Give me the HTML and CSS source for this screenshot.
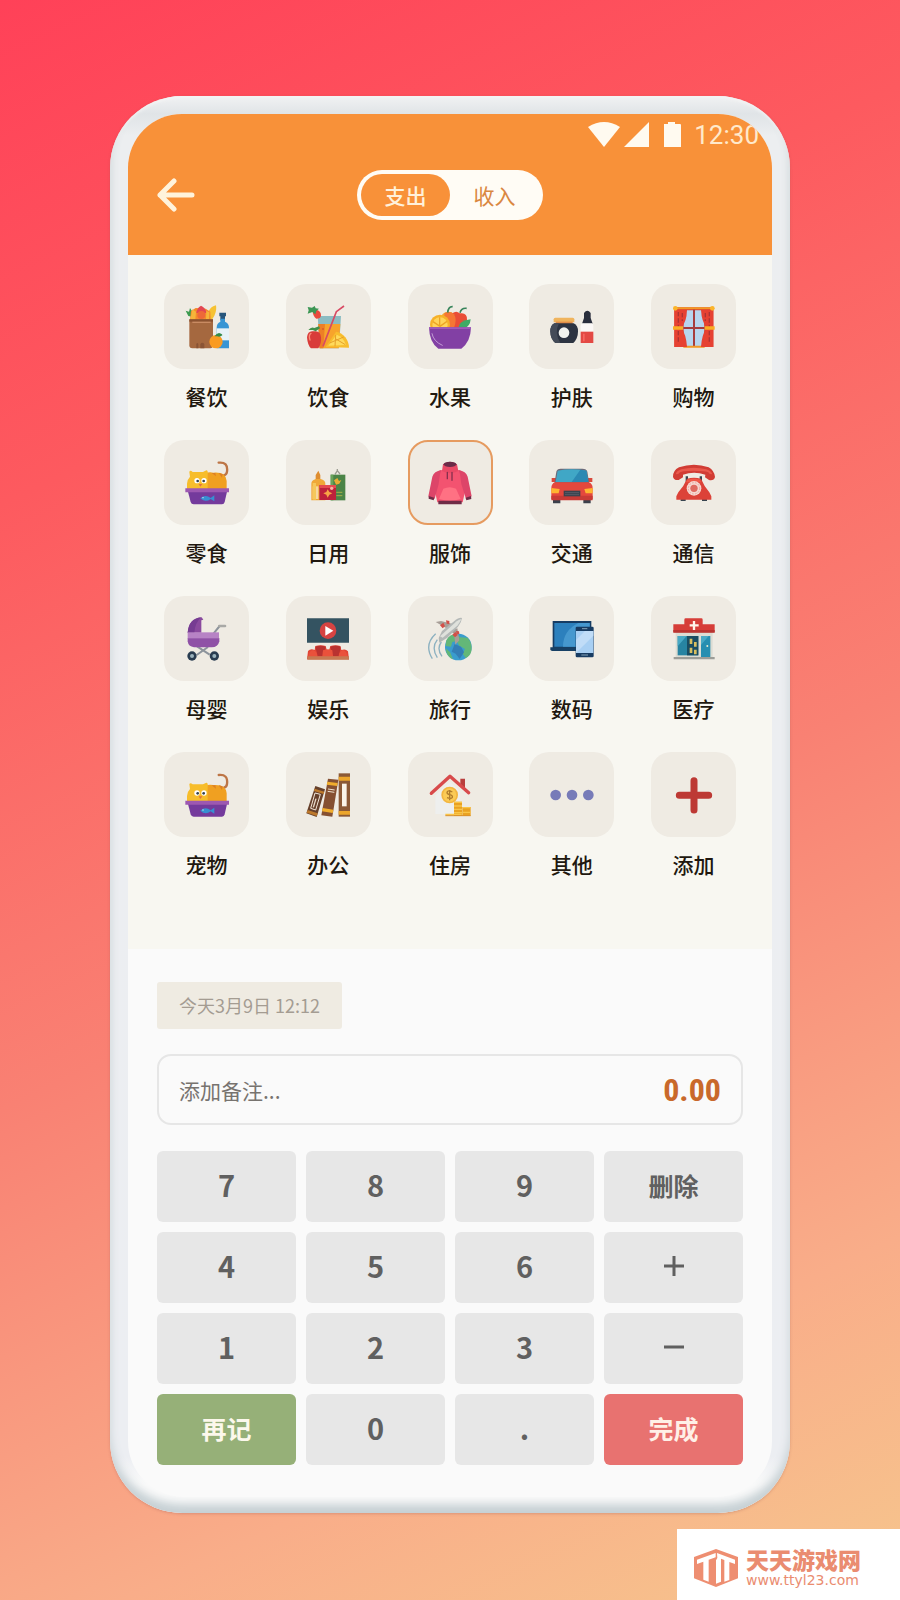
FILE: index.html
```html
<!DOCTYPE html>
<html lang="zh-CN">
<head>
<meta charset="utf-8">
<meta name="viewport" content="width=device-width, initial-scale=1">
<title>记账</title>
<link rel="stylesheet" href="styles.css">
</head>
<body>
<main class="phone">
  <div class="screen">
    <header class="header">
      <div class="status">
        <svg class="status-icons" width="96" height="28" viewBox="0 0 96 28" aria-hidden="true">
          <path d="M0 6Q16-4 32 6L16 26Z"/><path d="M36 26 61 1V26Z"/><path d="M76 3h4V1h7v2h5q1 0 1 1V26H76Z"/>
        </svg>
        <span class="clock">12:30</span>
      </div>
      <nav class="nav">
        <button class="back" type="button" aria-label="返回">
          <svg width="38" height="34" viewBox="0 0 38 34"><path d="M17 3 3 17l14 14M3 17h32"/></svg>
        </button>
        <div class="toggle">
          <button class="toggle-option is-active" type="button" aria-pressed="true">支出</button>
          <button class="toggle-option" type="button" aria-pressed="false">收入</button>
        </div>
      </nav>
    </header>

    <section class="categories" aria-label="分类">
      <button class="category" type="button">
        <span class="tile"><svg viewBox="104 104 132 132">
          <path fill="#3c9a50" d="M106 121l10 3 3-11 9 14-3 12-11-2z"/>
          <path fill="#f6c234" d="M170 148c0-20 8-40 27-43 3 18-5 34-13 44z"/>
          <path fill="#f48b2c" d="M119 149l3-27 14-9 30 2 14 9 1 25z"/>
          <path fill="#e34752" d="M138 128q2-16 14-22 14 6 16 22z"/><path fill="#f6b53a" d="M126 117l11 7-2 24h-15zM168 122l9 4-1 20h-9z"/>
          <circle cx="153" cy="134" r="12" fill="#ee6938"/><path fill="#a5683f" d="M117 147h71v78q0 9-8 9h-54q-9 0-9-9z"/>
          <path fill="#8b5230" d="M117 147h71v7h-71z"/><path stroke="#c98b63" stroke-width="4" d="M126 156h55"/>
          <path fill="#8a5435" d="M138 234v-13q3-6 6 0v13zM150 234v-13q6-7 12 0v13z"/>
          <path fill="#27567c" d="M207 127h20v11h-3v12h-14v-12h-3z"/><path fill="#3795d4" d="M210 145h14v9q12 5 12 18v62h-37v-62q0-13 11-18z"/>
          <path fill="#e7f2f7" d="M199 174h37v36h-37z"/><circle cx="197" cy="214" r="20" fill="#f99b22"/>
          <path fill="#348b49" d="M193 198q5-9 13-10 10 2 10 7-8 7-15 3z"/>
        </svg></span><span class="label">餐饮</span>
      </button>
      <button class="category" type="button">
        <span class="tile"><svg viewBox="469 104 132 132">
          <path fill="#8cbcc2" d="M504 137h70l-6 97h-58z"/><path fill="#f7a42b" d="M506 161h66l-5 73h-56z"/>
          <path fill="#ed7f26" d="M506 161h20l-5 73h-12z"/><circle cx="520" cy="176" r="3" fill="#d95c27"/>
          <path fill="#f8bd2d" d="M528 230l31-46q16 2 28 17 11 15 11 31z"/><path fill="#ffda5b" d="M536 226l25-33q20 6 28 31z"/>
          <path stroke="#e6a02a" stroke-width="3" d="M558 194l-2 34M540 218l42-18M557 205l30 18"/>
          <path fill="none" stroke="#d84a63" stroke-width="5" d="M520 228l40-104 23-17"/>
          <path fill="#ea4a3d" d="M489 121l12-3q14 5 13 18-1 9-14 9-11-8-11-24z"/><path fill="#3c9654" d="M474 110l13 2 8-5 3 7 10 1-8 7-3 10-9-7-14 5 3-10z"/>
          <path fill="#d93c3a" d="M472 201q2-22 21-18 19-4 21 18 2 18-8 33h-22q-10-8-12-33z"/>
          <path fill="none" stroke="#fa8b77" stroke-width="4" stroke-linecap="round" d="M481 209q-5-14 3-20"/>
          <path fill="#40904a" d="M476 179q9-11 18-6l14-5 3 6-13 9-9-4z"/>
        </svg></span><span class="label">饮食</span>
      </button>
      <button class="category" type="button">
        <span class="tile"><svg viewBox="84 104 132 132">
          <circle cx="145" cy="148" r="24" fill="#f4a62f"/><path fill="#e94d36" d="M157 129q12-9 22 0 23-4 22 19-2 22-28 28h-28z"/>
          <path fill="#f57634" d="M133 129q18-9 29 3 10 15 0 40h-28z"/>
          <path fill="none" stroke="#37845a" stroke-width="5" d="M143 127q2-19 15-18M180 127q4-15 20-13"/>
          <circle cx="120" cy="163" r="30" fill="#f6b129"/><circle cx="120" cy="164" r="23" fill="#ffd45a"/>
          <path stroke="#eca426" stroke-width="4" d="M119 141v26M99 154l21 14M141 153l-21 15"/><path fill="#3eab65" d="M175 172q2-21 37-25-2 22-20 28z"/>
          <path fill="#8240a4" d="M87 171h126q-1 44-29 64h-69q-27-18-28-64z"/><path fill="#9d5bb8" d="M87 171h126v5H87z"/>
          <path fill="none" stroke="#c29ad5" stroke-width="3" stroke-linecap="round" d="M96 190q4 23 31 35"/>
        </svg></span><span class="label">水果</span>
      </button>
      <button class="category" type="button">
        <span class="tile"><svg viewBox="449 104 132 132">
          <path fill="#f0b45d" d="M460 147q0-5 5-5h52q5 0 5 5v9h-62z"/><path fill="#e18d48" d="M466 154h51v7h-51z"/>
          <path fill="#2d3442" d="M462 159h58q13 6 13 24 0 22-14 35h-54q-15-12-15-35 0-18 12-24z"/>
          <path fill="#444b58" d="M462 159h14q-15 28 4 59h-15q-15-12-15-35 0-18 12-24z"/>
          <circle cx="491" cy="187" r="16" fill="#f2f3ef"/>
          <path fill="#292e3c" d="M551 128q10-14 20 0v15l6 17h-32l6-17z"/><path fill="#fbf8f6" d="M545 159h31q3 3 3 9v20h-38v-20q0-6 4-9z"/>
          <path fill="#e34944" d="M541 184h38v34h-38z"/><path fill="#f8665f" d="M548 190h5v23h-5z"/>
        </svg></span><span class="label">护肤</span>
      </button>
      <button class="category" type="button">
        <span class="tile"><svg viewBox="814 104 132 132">
          <path fill="#d84232" d="M821 111h117v119H821z"/><path fill="#b8d5ee" d="M857 120h46q16 50 0 108h-46q-17-54 0-108z"/>
          <path stroke="#a73c3d" stroke-width="6" d="M880 117v113M848 173h64"/><path stroke="#f39925" stroke-width="6" d="M823 114h114M848 229h64"/>
          <path fill="#e64132" d="M821 118h38q-1 38-17 52h-21zM901 118h37v52h-20q-15-14-17-52zM821 176h21q14 13 17 54h-38zM918 176h20v54h-37q3-41 17-54z"/>
          <path stroke="#ad3333" stroke-width="4" stroke-dasharray="13 6" d="M833 125v91M845 128v24M926 125v91M914 128v24"/>
          <path fill="#faad25" d="M817 168h30v10h-30zM912 168h30v10h-30z"/><circle cx="824" cy="114" r="7" fill="#fbb42a"/><circle cx="935" cy="114" r="7" fill="#fbb42a"/>
        </svg></span><span class="label">购物</span>
      </button>

      <button class="category" type="button">
        <span class="tile"><svg viewBox="104 92 132 132">
          <path fill="none" stroke="#bd7546" stroke-width="7" stroke-linecap="round" d="M205 97q29-3 25 27-1 9-9 11"/>
          <path fill="#f0a021" d="M157 136q10-13 32-9 38-3 40 25v24h-72z"/><path fill="#f7bd2b" d="M117 125q2-7 10 0h31l10-5q6 0 4 14v42h-62v-16q0-12 9-21z"/>
          <path fill="#dc7f26" d="M184 128l13 10-2-10zM205 128l10 14 2-11z"/>
          <circle cx="140" cy="151" r="8" fill="#fff"/><circle cx="161" cy="151" r="8" fill="#fff"/><circle cx="142" cy="152" r="4" fill="#34424f"/><circle cx="160" cy="152" r="4" fill="#34424f"/>
          <path fill="#e4713f" d="M145 161h11l-6 8z"/><path fill="#743a9c" d="M113 184h117l-7 31q-2 7-8 7h-85q-7 0-9-7z"/><path fill="#9d58b1" d="M105 174h131v12H105z"/>
          <path fill="#378fd2" d="M150 204q15-14 31-1l11-8v18l-11-7q-16 12-31-2z"/><circle cx="158" cy="202" r="2" fill="#d6edf6"/>
        </svg></span><span class="label">零食</span>
      </button>
      <button class="category" type="button">
        <span class="tile"><svg viewBox="469 92 132 132">
          <path fill="#de8d30" d="M498 134l8-13 6 13v17h-14z"/><path fill="#f0a838" d="M485 160q0-10 14-14h14q14 4 14 14v50h-42z"/><path fill="#f7d7a1" d="M489 168h17v38h-17z"/>
          <path fill="#f5c75b" d="M489 158h10v50h-10z"/><path fill="none" stroke="#9c9d92" stroke-width="4" d="M556 132l7-11 8 10M563 116v9"/>
          <path fill="#4b8447" d="M543 133h44v77h-44z"/><path fill="#69a35b" d="M543 133h8v77h-8z"/><path fill="#e7ad34" d="M553 150l10-7 5 9 7-3-6 11-10 3z"/>
          <path stroke="#a8af49" stroke-width="3" d="M560 186h18M560 196h18"/><path fill="#bd213b" d="M509 164h50v45h-50z"/><path fill="#e44a50" d="M509 164h50v9h-50z"/>
          <path fill="#f7a446" d="M534 177l5 8 9 4-9 4-5 9-4-9-9-4 9-4z"/><circle cx="546" cy="174" r="5" fill="#f6b4a1"/>
        </svg></span><span class="label">日用</span>
      </button>
      <button class="category is-selected" type="button" aria-pressed="true">
        <span class="tile"><svg viewBox="84 92 132 132">
          <path fill="#f35370" d="M118 121q32-12 64 0l14 10 4 30-12 55h-76l-12-55 4-30z"/>
          <path fill="#dd4569" d="M124 119q-22 4-27 20l-12 59q9 7 19 7l12-44 4-30zM176 119q22 4 27 20l12 59q-9 7-17 8l-14-45-4-30z"/>
          <path fill="#e94966" d="M126 122l3-20q21-16 42 0l4 20q-25 13-49 0z"/><ellipse cx="150" cy="102" rx="19" ry="8" fill="#6b2b48"/>
          <path fill="#ff7183" d="M130 175q19-9 38 0l14 31q-32 11-65 0z"/><path stroke="#86314d" stroke-width="4" stroke-linecap="round" d="M142 126v19M156 126v24"/>
          <path fill="#6f2c47" d="M115 211h70v11h-70zM86 197l17 5-2 8-15-5zM197 202l16-5 1 9-15 4z"/>
        </svg></span><span class="label">服饰</span>
      </button>
      <button class="category" type="button">
        <span class="tile"><svg viewBox="449 92 132 132">
          <path fill="#3b404b" d="M458 201h22v18h-22zM549 201h22v18h-22z"/><path fill="#d9493b" d="M454 143h14v12h-14zM562 143h14v12h-14z"/>
          <path fill="#6d6a78" d="M468 124q2-9 13-9h65q13 0 15 9l6 37H462z"/><path fill="#40a7c6" d="M472 121q42-8 86 0l6 34h-98z"/><path fill="#2b89b3" d="M540 118l18 3 6 34h-50z"/>
          <path fill="#e4483d" d="M464 156h101q12 4 12 18v32H453v-32q0-14 11-18z"/><path fill="#c93b36" d="M453 196h124v12q0 2-3 2H456q-3 0-3-2z"/>
          <path fill="#ffb531" d="M453 173l25 3-3 13h-22zM577 173l-25 3 4 13h21z"/><path fill="#3c424d" d="M490 181h50v17h-50z"/><path stroke="#666772" stroke-width="2" d="M494 187h42M494 193h42"/>
        </svg></span><span class="label">交通</span>
      </button>
      <button class="category" type="button">
        <span class="tile"><svg viewBox="814 92 132 132">
          <path fill="#374450" d="M840 203h15v9h-15zM904 203h15v9h-15zM855 138h7v16h-7zM897 138h7v16h-7z"/>
          <path fill="#dc4238" d="M859 145q21-6 42 0 8 20 25 41l6 12v10H827v-10l6-12q18-21 26-41z"/><path fill="#ef5848" d="M860 148q19-5 38 0l3 8h-45z"/>
          <path fill="#d13c34" d="M817 140q-1-19 18-29 45-15 89 0 17 10 19 29-3 12-18 9l-12-8 1-8q-34-12-67 0v8l-13 8q-14 2-17-9z"/>
          <path fill="#e9584c" d="M825 132q2-10 17-15 37-9 75 0 15 5 18 15l-8-1q-3-8-18-8-30-4-60 0-13 2-16 8z"/>
          <circle cx="880" cy="174" r="22" fill="#f5d8d1"/><circle cx="880" cy="174" r="11" fill="#df6b61"/><circle cx="880" cy="174" r="17" fill="none" stroke="#eba79e" stroke-width="3" stroke-dasharray="5 4"/>
        </svg></span><span class="label">通信</span>
      </button>

      <button class="category" type="button">
        <span class="tile"><svg viewBox="104 80 132 132">
          <path fill="none" stroke="#8d949c" stroke-width="6" d="M190 129l18-22M139 194l34-24M178 193l-38-25"/><path stroke="#a9a9a6" stroke-width="8" stroke-linecap="round" d="M207 107h17"/>
          <path fill="#8a4a9e" d="M112 127q3-42 42-46l5 7-6 2v37z"/><path fill="#763c92" d="M112 127q3-42 40-46-18 17-20 46z"/><path fill="#8f51a6" d="M112 143h95v10q-4 18-23 18h-53q-17-2-19-18z"/>
          <path fill="#b783c5" d="M112 126h94v18h-94z"/><circle cx="125" cy="197" r="14" fill="#293c50"/><circle cx="192" cy="197" r="14" fill="#293c50"/><circle cx="125" cy="197" r="6" fill="#9bb3bd"/><circle cx="192" cy="197" r="6" fill="#9bb3bd"/>
        </svg></span><span class="label">母婴</span>
      </button>
      <button class="category" type="button">
        <span class="tile"><svg viewBox="469 80 132 132">
          <path fill="#345361" d="M472 84h126v73H472z"/><circle cx="535" cy="121" r="25" fill="#d64342"/><path fill="#fff" d="M527 107l24 14-24 15z"/>
          <path fill="#e24535" d="M475 182q8-9 20-3l2-12q16-5 31 0l4 14h6l4-14q16-5 30 0l3 12q13-5 20 4l3 24H472z"/>
          <path fill="#b93230" d="M497 169q16-6 31 0l-4 28h-20zM542 169q16-6 31 0l-5 28h-20z"/><path fill="#ea513b" d="M490 179q16 5 12 25h-26q1-24 14-25zM520 180q15-7 28 0l3 25h-34zM580 179q13 4 15 25h-28q-2-20 13-25z"/><path fill="#c87952" d="M473 198h125v10H473z"/>
        </svg></span><span class="label">娱乐</span>
      </button>
      <button class="category" type="button">
        <span class="tile"><svg viewBox="84 80 132 132">
          <circle cx="175" cy="170" r="40" fill="#3a9cce"/><path fill="#63b778" d="M139 150q10-19 30-19l11 10 22 1q16 15 12 41-4 16-17 20l-9-13 7-14-17-10-8-14-13 3-4 14-16-2zM137 174l13 11 9 22q-20-7-22-33z"/>
          <path fill="#347eb5" d="M164 161l19 8 9 17-13 20-12-16-12-6z"/><path fill="none" stroke="#8cb1c0" stroke-width="4" d="M107 130q-36 33-10 75M112 148q-19 24 0 54M124 155q-15 20 2 43"/>
          <path fill="#a89e98" d="M107 95l16-3 35 9-16 14zM150 122l12 8 4 33 12-13-6-36z"/><path fill="#b4b8b7" d="M116 143l10-21 37-30q15-12 23-9-1 12-12 26l-32 33-24 15z"/>
          <path fill="#dfe1dc" d="M120 138l50-45q10-7 14-6-4 9-12 19l-44 36z"/><path fill="#d34f48" d="M120 105l8 9 7-6-5-11zM138 90l10 2v9l-8-1zM157 133l8 8 8-7-7-9zM168 122l9 1 1 8-8 1z"/>
        </svg></span><span class="label">旅行</span>
      </button>
      <button class="category" type="button">
        <span class="tile"><svg viewBox="449 80 132 132">
          <path fill="#153c64" d="M457 92h116v82H457z"/><path fill="#2c80bd" d="M462 98h106v71H462z"/><path fill="#4698cf" d="M534 98h34v71h-80q0-48 46-71z"/><path fill="#174065" d="M450 171h86v11h-80q-6 0-6-5z"/>
          <path fill="#173b62" d="M526 113q0-4 4-4h46q4 0 4 4v84q0 4-4 4h-46q-4 0-4-4z"/><path fill="#a8cff3" d="M527 122h52v66h-52z"/><path fill="#c0dcf7" d="M579 122v14l-52 52v-39l27-27z"/><path stroke="#86a3b7" stroke-width="3" d="M543 194h20M545 115h16"/>
        </svg></span><span class="label">数码</span>
      </button>
      <button class="category" type="button">
        <span class="tile"><svg viewBox="814 80 132 132">
          <path fill="#dcdcd3" d="M825 124h111v80H825z"/><path fill="#2784a2" d="M831 137h62v58h-62z"/><path fill="#194c62" d="M859 137h34v58h-34z"/><path fill="#d9bf60" d="M867 145h8v16h-8zM880 155h8v14h-8zM867 172h8v16h-8zM880 178h8v14h-8z"/>
          <path fill="#268eb1" d="M901 137h28v66h-28z"/><path fill="#49a9c5" d="M831 137h27l-27 31zM901 137h23l-23 27z"/><circle cx="920" cy="167" r="3" fill="#e8ebcf"/><path fill="#9c9d98" d="M819 200h123v7H819z"/>
          <path fill="#d63d38" d="M818 102h33V88q0-4 4-4h47q4 0 4 4v14h36v24H818z"/><path fill="#b93431" d="M818 119h124v8H818z"/><path stroke="#fff4ea" stroke-width="7" d="M880 92v27M867 105h27"/>
        </svg></span><span class="label">医疗</span>
      </button>

      <button class="category" type="button">
        <span class="tile"><svg viewBox="104 83 132 132">
          <path fill="none" stroke="#bd7546" stroke-width="7" stroke-linecap="round" d="M205 89q29-3 25 27-1 9-9 11"/>
          <path fill="#f0a021" d="M157 128q10-13 32-9 38-3 40 25v24h-72z"/><path fill="#f7bd2b" d="M117 117q2-7 10 0h31l10-5q6 0 4 14v42h-62v-16q0-12 9-21z"/>
          <path fill="#dc7f26" d="M184 120l13 10-2-10zM205 120l10 14 2-11z"/><circle cx="140" cy="143" r="8" fill="#fff"/><circle cx="161" cy="143" r="8" fill="#fff"/><circle cx="142" cy="144" r="4" fill="#34424f"/><circle cx="160" cy="144" r="4" fill="#34424f"/>
          <path fill="#e4713f" d="M145 153h11l-6 8z"/><path fill="#743a9c" d="M113 176h117l-7 31q-2 7-8 7h-85q-7 0-9-7z"/><path fill="#9d58b1" d="M105 166h131v12H105z"/>
          <path fill="#378fd2" d="M150 196q15-14 31-1l11-8v18l-11-7q-16 12-31-2z"/><circle cx="158" cy="194" r="2" fill="#d6edf6"/>
        </svg></span><span class="label">宠物</span>
      </button>
      <button class="category" type="button">
        <span class="tile"><svg viewBox="469 83 132 132">
          <path fill="#8b5936" d="M567 84h34v130h-34z"/><path fill="#eca52b" d="M567 94h34v12h-34zM567 197h34v11h-34z"/><path fill="#faf4e9" d="M577 115h14v68h-14z"/>
          <path fill="#855032" d="M535 100l31 3-18 111-33-4z"/><path fill="#f0ad2d" d="M533 109l31 4-2 9-31-4zM519 188l32 5-2 10-32-5z"/><path stroke="#efe2cf" stroke-width="3" d="M535 131l20 3M534 138l20 3"/>
          <path fill="#66402b" d="M497 122l29 10-25 83-31-11z"/><path fill="#bd792c" d="M495 130l29 9-2 7-29-9zM474 194l30 10-3 8-30-10z"/><path fill="none" stroke="#f4e7d8" stroke-width="3" d="M496 143l16 4-14 47-15-5z"/><path stroke="#e9dacb" stroke-width="4" d="M499 160l-8 26"/>
        </svg></span><span class="label">办公</span>
      </button>
      <button class="category" type="button">
        <span class="tile"><svg viewBox="84 83 132 132">
          <path fill="#b93f3d" d="M181 100h14v36l-14-12z"/><path fill="#eeefee" d="M106 150l44-40 30 28v68h-74z"/><path fill="none" stroke="#d84a4b" stroke-width="10" stroke-linecap="round" stroke-linejoin="round" d="M94 144l56-51 56 49"/>
          <circle cx="149" cy="149" r="25" fill="#f3b640"/><circle cx="149" cy="149" r="20" fill="#fbcb56"/><path fill="none" stroke="#b17d2c" stroke-width="4" d="M157 140q-13-7-16 1 0 6 8 7 10 2 8 8-3 6-16 1M149 134v31"/>
          <path fill="#eaa221" d="M162 169h24v42h-24zM187 185h25v26h-25z"/><path stroke="#f9c548" stroke-width="4" d="M162 171h24M162 182h24M162 192h24M162 202h24M187 187h25M187 201h25M136 207h49"/><path stroke="#d98e24" stroke-width="3" d="M136 211h76"/>
        </svg></span><span class="label">住房</span>
      </button>
      <button class="category" type="button">
        <span class="tile"><svg viewBox="449 83 132 132"><g fill="#777bb8"><circle cx="466" cy="149" r="16"/><circle cx="515" cy="149" r="16"/><circle cx="564" cy="149" r="16"/></g></svg></span><span class="label">其他</span>
      </button>
      <button class="category" type="button">
        <span class="tile"><svg viewBox="814 83 132 132"><path stroke="#bd3934" stroke-width="21" stroke-linecap="round" d="M880 106v88M836 150h88"/></svg></span><span class="label">添加</span>
      </button>
    </section>

    <section class="entry" aria-label="记一笔">
      <button class="date" type="button">今天3月9日 12:12</button>
      <div class="note">
        <input class="note-input" type="text" placeholder="添加备注..." aria-label="添加备注">
        <output class="amount">0.00</output>
      </div>
      <div class="keypad">
        <button class="key" type="button">7</button>
        <button class="key" type="button">8</button>
        <button class="key" type="button">9</button>
        <button class="key key-text" type="button">删除</button>
        <button class="key" type="button">4</button>
        <button class="key" type="button">5</button>
        <button class="key" type="button">6</button>
        <button class="key key-text" type="button" aria-label="加"><svg width="22" height="22" viewBox="0 0 22 22"><path d="M11 1v20M1 11h20"/></svg></button>
        <button class="key" type="button">1</button>
        <button class="key" type="button">2</button>
        <button class="key" type="button">3</button>
        <button class="key key-text" type="button" aria-label="减"><svg width="22" height="22" viewBox="0 0 22 22"><path d="M1 11h20"/></svg></button>
        <button class="key key-text key-again" type="button">再记</button>
        <button class="key" type="button">0</button>
        <button class="key" type="button">.</button>
        <button class="key key-text key-done" type="button">完成</button>
      </div>
    </section>
  </div>
</main>

<a class="site" href="#">
  <svg width="44" height="38" viewBox="882 537 132 114" aria-hidden="true">
    <path fill="#ee8e71" d="M948 537l66 24v64l-66 26-66-26v-64z"/>
    <path fill="#fff" d="M891 569l56-20v13l-21 7v66l-16-6v-54l-19 7zM951 549l54 20v13l-17-6v54l-15 5v-65l-10-4v69l-15 6v-70l4-7z"/>
  </svg>
  <span class="site-text"><span class="site-name">天天游戏网</span><span class="site-url">www.ttyl23.com</span></span>
</a>
</body>
</html>
```
FILE: styles.css
```css
* {
  box-sizing: border-box;
}

body {
  position: relative;
  min-height: 100vh;
  margin: 0;
  padding: 96px 24px 87px;
  background: linear-gradient(155deg, #ff4158 0%, #fd5a5f 25%, #f98173 55%, #f9ad89 82%, #f6c68d 100%);
  font-family: "Noto Sans CJK SC", sans-serif;
}

button,
input {
  margin: 0;
  padding: 0;
  border: 0;
  background: none;
  color: inherit;
  font: inherit;
}

.phone {
  max-width: 680px;
  margin: 0 auto;
  padding: 18px 18px 16px;
  border-radius: 72px;
  background: linear-gradient(#f1f2f3 0, #e0e4e7 18px, #eceef0 40px, #eceef2 96%, #fafafa 98%);
  box-shadow: inset 0 -9px 10px #c6d0d4, inset 0 2px 3px #f4f4f4, 0 1px 3px rgba(150, 80, 80, 0.3);
}

.screen {
  overflow: hidden;
  border-radius: 54px 54px 56px 56px;
  background: #fafafa;
}

.header {
  padding-bottom: 35px;
  background: #f89139;
  color: #fffaf0;
}

.status {
  display: flex;
  align-items: center;
  justify-content: flex-end;
  gap: 10px;
  height: 42px;
  padding-right: 13px;
}

.status-icons {
  fill: #fffaf0;
}

.clock {
  color: #ffe9cb;
  font: 26px/32px Roboto, sans-serif;
}

.nav {
  display: grid;
  grid-template-columns: 1fr auto 1fr;
  align-items: center;
  margin-top: 14px;
  padding: 0 29px;
}

.back {
  display: flex;
  justify-self: start;
}

.back svg {
  fill: none;
  stroke: #fff3dc;
  stroke-width: 5;
  stroke-linecap: round;
  stroke-linejoin: round;
}

.toggle {
  display: flex;
  padding: 4px;
  border-radius: 25px;
  background: #fffcf5;
}

.toggle-option {
  width: 89px;
  height: 42px;
  border-radius: 21px;
  color: #da8741;
  font-size: 21px;
  line-height: 42px;
}

.toggle-option.is-active {
  background: #f89139;
  color: #fff1db;
  font-weight: 500;
}

.categories {
  display: grid;
  grid-template-columns: repeat(5, 85px);
  justify-content: space-between;
  row-gap: 30px;
  padding: 29px 36px 71px;
  background: #f8f7f1;
}

.category {
  display: flex;
  flex-direction: column;
  align-items: center;
  gap: 13px;
}

.tile {
  display: grid;
  place-items: center;
  width: 85px;
  height: 85px;
  border: 2px solid transparent;
  border-radius: 20px;
  background: #efebe3;
}

.is-selected .tile {
  border-color: #e69b60;
}

.tile svg {
  width: 44px;
  height: 44px;
}

.label {
  color: #21180f;
  font-size: 21px;
  font-weight: 500;
  line-height: 28px;
}

.entry {
  padding: 33px 29px 32px;
}

.date {
  height: 47px;
  padding: 0 22px 2px;
  border-radius: 3px;
  background: #efebe2;
  color: #a49c92;
  font-size: 18px;
}

.note {
  display: flex;
  align-items: center;
  height: 71px;
  margin: 25px 0 26px;
  padding: 0 20px;
  border: 2px solid #e6e6e6;
  border-radius: 14px;
}

.note-input {
  flex: 1;
  min-width: 0;
  color: #77736f;
  font-size: 21px;
}

.note-input::placeholder {
  color: #77736f;
}

.amount {
  color: #c9692b;
  font: bold 32px/44px "Roboto Condensed", "Liberation Sans Narrow", Roboto, sans-serif;
}

.keypad {
  display: grid;
  grid-template-columns: repeat(4, 1fr);
  gap: 10px;
}

.key {
  display: grid;
  place-items: center;
  height: 71px;
  padding-bottom: 5px;
  border-radius: 6px;
  background: #e7e7e7;
  color: #606060;
  font-size: 29px;
  font-weight: 700;
}

.key svg {
  stroke: #606060;
  stroke-width: 3;
}

.key-text {
  padding-bottom: 3px;
  font-size: 25px;
}

.key-again {
  background: #96b078;
  color: #fcf8ec;
}

.key-done {
  background: #e87270;
  color: #fff0e7;
}

.site {
  position: absolute;
  right: 0;
  bottom: 0;
  display: flex;
  align-items: center;
  gap: 8px;
  height: 71px;
  padding: 6px 39px 0 17px;
  background: #fff;
  color: #ea8c70;
  text-decoration: none;
}

.site-text {
  display: flex;
  flex-direction: column;
}

.site-name {
  font-size: 23px;
  font-weight: 900;
  line-height: 24px;
}

.site-url {
  font: 14px/18px "DejaVu Sans", sans-serif;
}
```
